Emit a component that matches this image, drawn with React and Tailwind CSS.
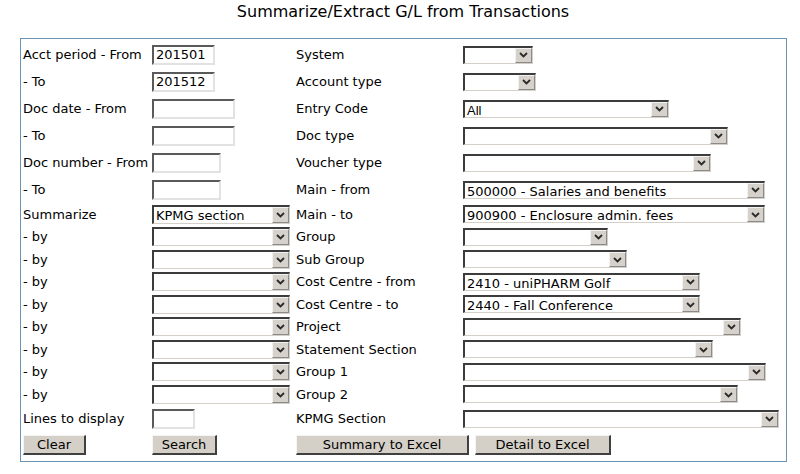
import React from 'react';

const Chevron = () => (
    <svg width="9" height="6" viewBox="0 0 9 6" className="block">
        <polyline points="1,1 4.5,4.5 8,1" fill="none" stroke="#2a2a2a" strokeWidth="1.8" />
    </svg>
);

// old-style sunken dropdown
const Select = ({ w, h = 'h-[18px]', value, arial }) => (
    <div className={`${w} ${h} flex bg-white border-t-2 border-l-2 border-t-[#3c3c3c] border-l-[#3c3c3c] border-b border-r border-b-[#d4d0c8] border-r-[#d4d0c8]`}>
        <div className={`flex-1 min-w-0 pl-[2px] leading-[16px] whitespace-nowrap overflow-hidden pt-[1px] ${arial ? "text-[13px] font-['Liberation_Sans',Arial,sans-serif]" : 'text-[13px]'}`}>{value}</div>
        <div className="w-[17px] h-full flex items-center justify-center bg-[#d6d2cb] border-t border-l border-t-[#f2f2f2] border-l-[#f2f2f2] border-b border-r border-b-[#8a8a8a] border-r-[#8a8a8a]">
            <Chevron />
        </div>
    </div>
);

const Input = ({ w, value }) => (
    <input
        readOnly
        value={value || ''}
        className={`${w} h-[20px] bg-white px-[2px] text-[13px] leading-[16px] outline-none border-t-2 border-l-2 border-t-[#5a5a5a] border-l-[#5a5a5a] border-b-2 border-r-2 border-b-[#e2e2e2] border-r-[#e2e2e2]`}
    />
);

const Button = ({ w, children }) => (
    <button className={`${w} h-[20px] bg-[#d4d0c8] text-[13px] leading-[16px] text-black border-t border-l border-t-[#f4f4f4] border-l-[#f4f4f4] border-b-2 border-r-2 border-b-[#404040] border-r-[#404040]`}>
        {children}
    </button>
);

const leftRows = [
    { label: 'Acct period - From', kind: 'input', w: 'w-[63px]', value: '201501' },
    { label: '- To', kind: 'input', w: 'w-[63px]', value: '201512' },
    { label: 'Doc date - From', kind: 'input', w: 'w-[83px]' },
    { label: '- To', kind: 'input', w: 'w-[83px]' },
    { label: 'Doc number - From', kind: 'input', w: 'w-[69px]' },
    { label: '- To', kind: 'input', w: 'w-[69px]' },
    { label: 'Summarize', kind: 'select', value: 'KPMG section' },
    { label: '- by', kind: 'select' },
    { label: '- by', kind: 'select' },
    { label: '- by', kind: 'select' },
    { label: '- by', kind: 'select' },
    { label: '- by', kind: 'select' },
    { label: '- by', kind: 'select' },
    { label: '- by', kind: 'select' },
    { label: '- by', kind: 'select' },
    { label: 'Lines to display', kind: 'input', w: 'w-[43px]' },
];

const rightRows = [
    { label: 'System', w: 'w-[70px]' },
    { label: 'Account type', w: 'w-[73px]' },
    { label: 'Entry Code', w: 'w-[206px]', value: 'All', arial: true },
    { label: 'Doc type', w: 'w-[265px]' },
    { label: 'Voucher type', w: 'w-[248px]' },
    { label: 'Main - from', w: 'w-[302px]', value: '500000 - Salaries and benefits' },
    { label: 'Main - to', w: 'w-[302px]', value: '900900 - Enclosure admin. fees' },
    { label: 'Group', w: 'w-[145px]' },
    { label: 'Sub Group', w: 'w-[164px]' },
    { label: 'Cost Centre - from', w: 'w-[237px]', value: '2410 - uniPHARM Golf' },
    { label: 'Cost Centre - to', w: 'w-[237px]', value: '2440 - Fall Conference' },
    { label: 'Project', w: 'w-[278px]' },
    { label: 'Statement Section', w: 'w-[250px]' },
    { label: 'Group 1', w: 'w-[303px]' },
    { label: 'Group 2', w: 'w-[275px]' },
    { label: 'KPMG Section', w: 'w-[316px]' },
];

export default function App() {
    return (
        <div className="w-[800px] h-[474px] bg-white text-black font-['DejaVu_Sans',Verdana,sans-serif] overflow-hidden">
            {/* Title */}
            <div className="h-[38px] pt-[2px] text-center text-[16px] leading-[20px] pl-[6px]">
                Summarize/Extract G/L from Transactions
            </div>

            {/* Form box */}
            <div className="ml-[20px] w-[767px] border border-[#6a93b5] pl-[2px] pt-[2px] pb-[2px]">
                <div className="grid grid-cols-[129px_144px_167px_1fr] grid-rows-[27px_27px_27px_27px_27px_27px_repeat(9,22.5px)_26px_27px] text-[13px] leading-[16px]">
                    {leftRows.map((row, i) => {
                        const right = rightRows[i];
                        return (
                            <React.Fragment key={i}>
                                <div className="flex items-center whitespace-nowrap pt-[1px]">{row.label}</div>
                                <div className="flex items-center">
                                    {row.kind === 'input'
                                        ? <Input w={row.w} value={row.value} />
                                        : <Select w="w-[138px]" h="h-[19px]" value={row.value} />}
                                </div>
                                <div className="flex items-center whitespace-nowrap pt-[1px]">{right.label}</div>
                                <div className="flex items-center">
                                    <Select w={right.w} value={right.value} arial={right.arial} />
                                </div>
                            </React.Fragment>
                        );
                    })}

                    {/* Buttons */}
                    <div className="flex items-center"><Button w="w-[63px]">Clear</Button></div>
                    <div className="flex items-center"><Button w="w-[65px]">Search</Button></div>
                    <div className="col-span-2 flex items-center gap-[6px]">
                        <Button w="w-[173px]">Summary to Excel</Button>
                        <Button w="w-[136px]">Detail to Excel</Button>
                    </div>
                </div>
            </div>
        </div>
    );
}
